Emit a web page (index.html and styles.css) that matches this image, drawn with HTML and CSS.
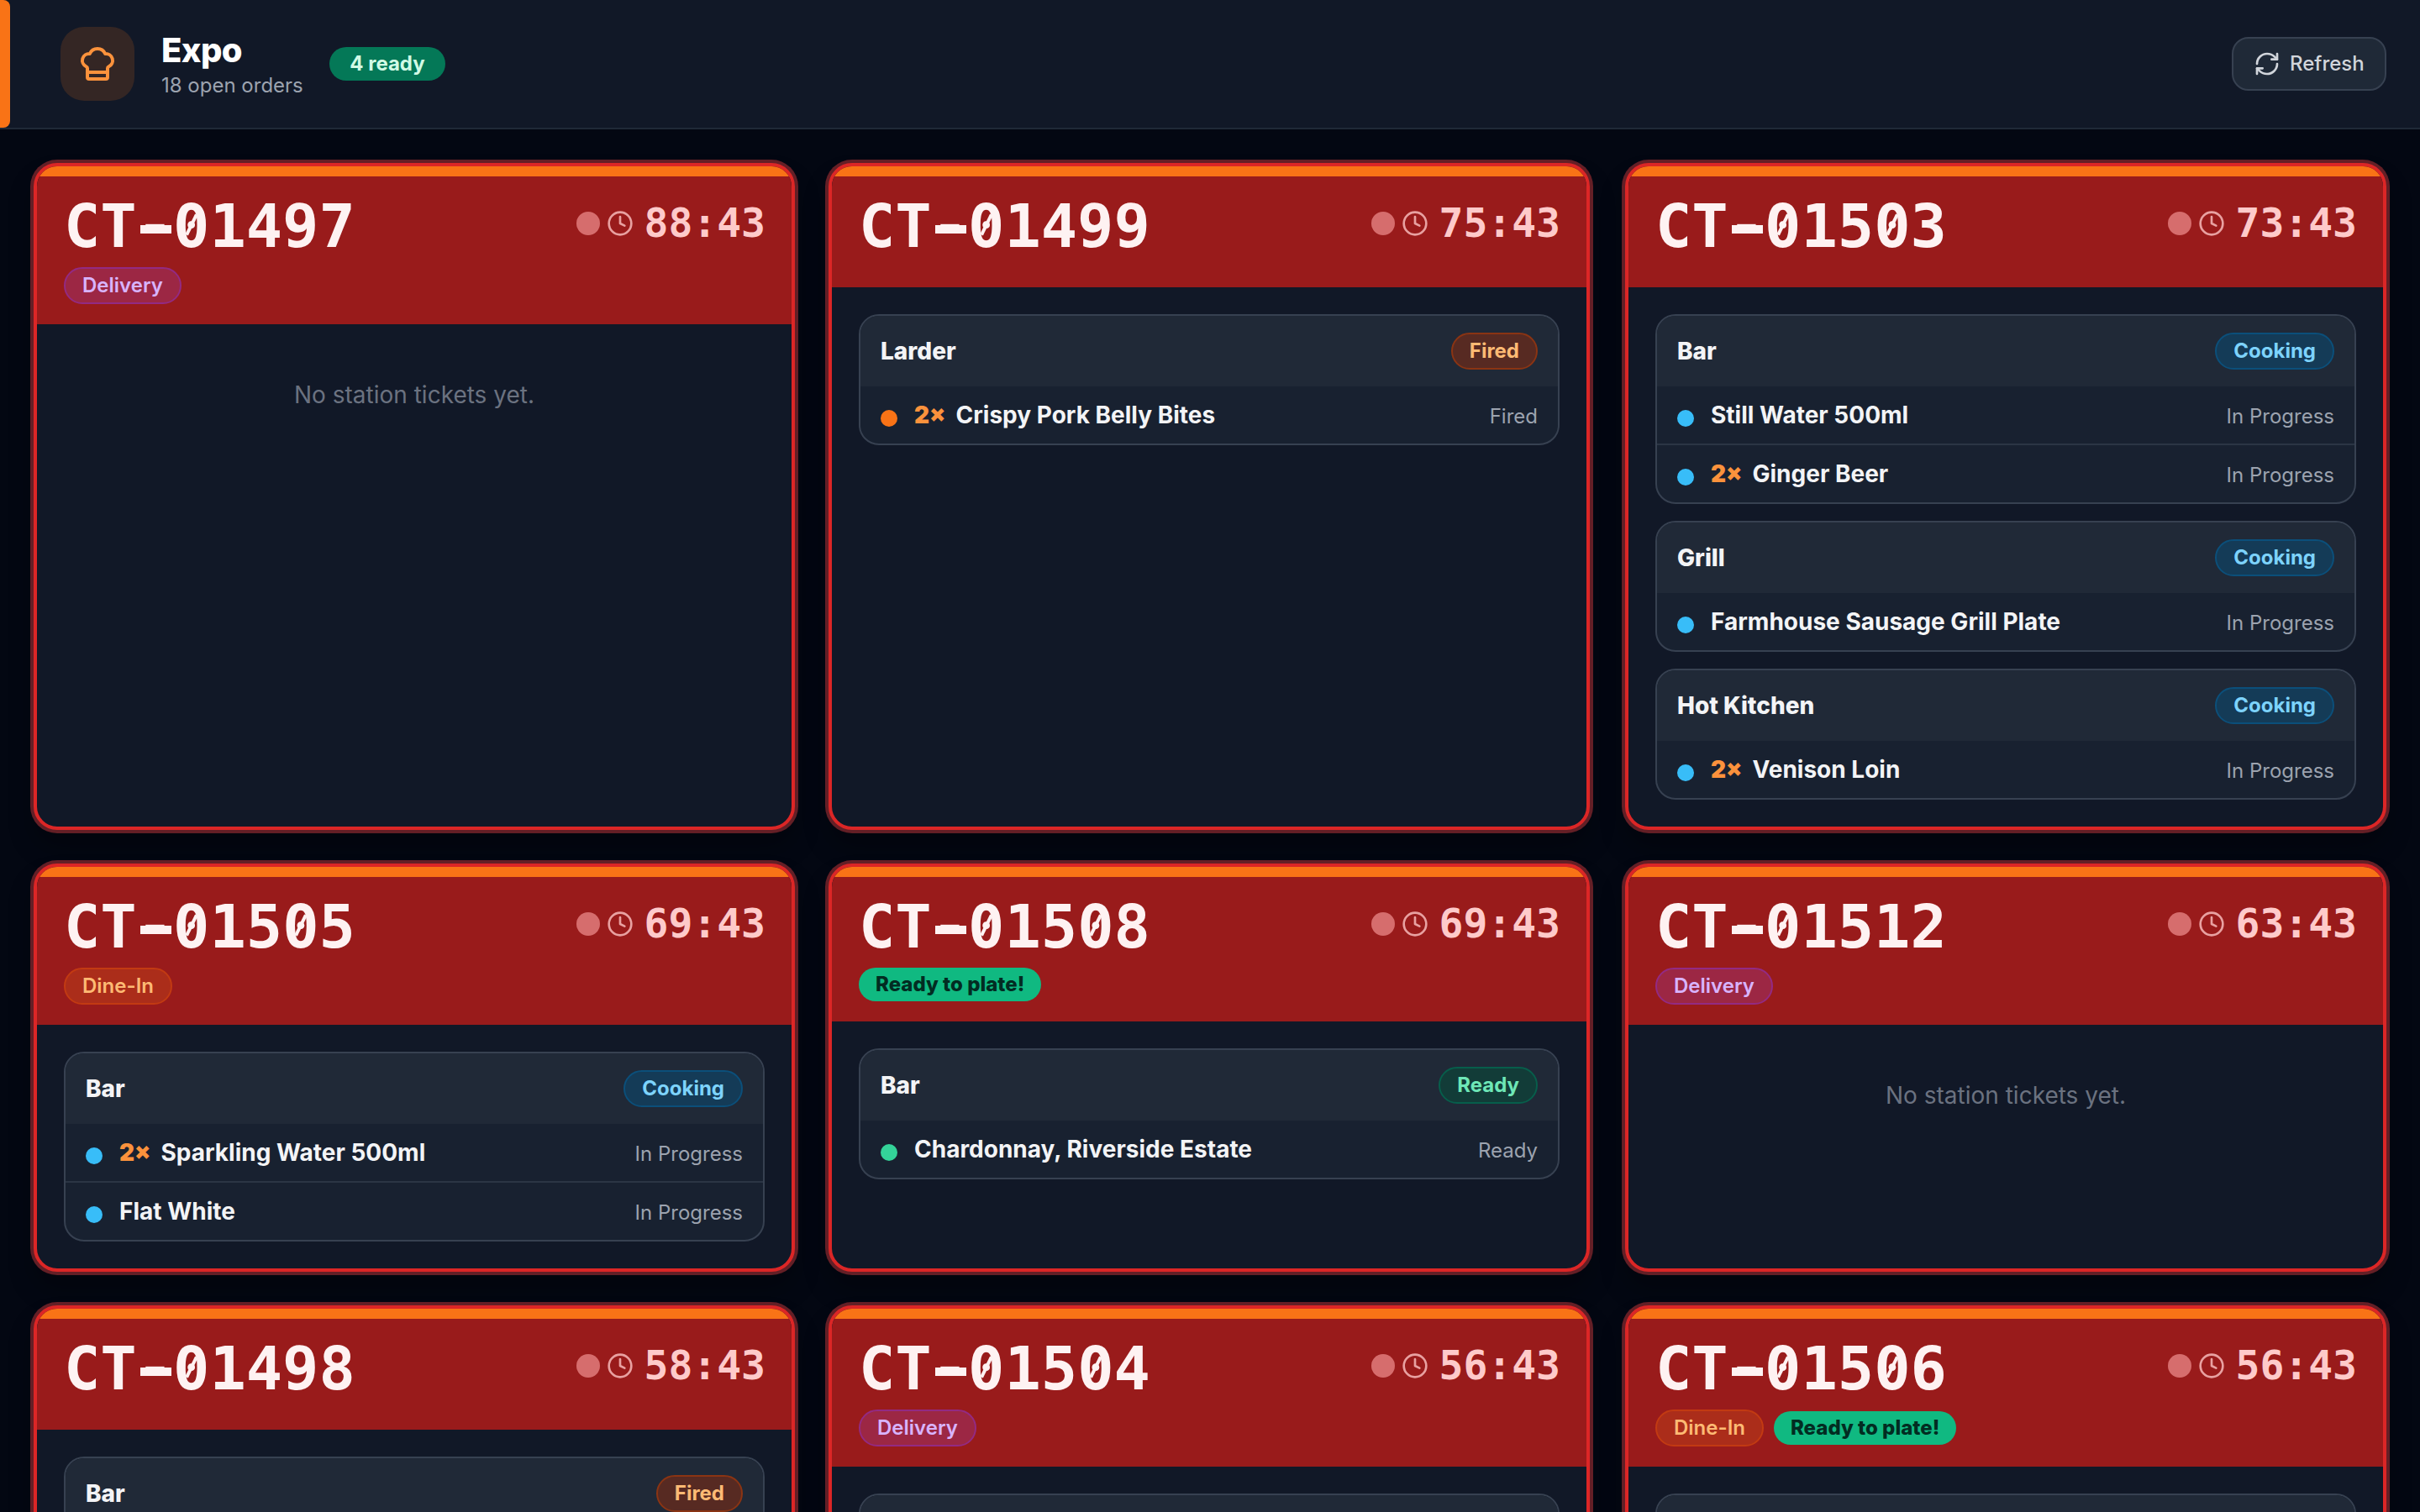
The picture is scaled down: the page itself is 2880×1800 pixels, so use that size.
FILE: index.html
```html
<!DOCTYPE html>
<html lang="en">
<head>
<meta charset="utf-8">
<title>Expo</title>
<link rel="stylesheet" href="styles.css">
</head>
<body>
<svg class="sprite" aria-hidden="true">
  <symbol id="clock" viewBox="0 0 24 24"><circle cx="12" cy="12" r="10"/><path d="M12 6v6l4 2"/></symbol>
</svg>
<header class="topbar">
  <div class="brand-icon">
    <svg class="icon icon-hat" viewBox="0 0 24 24"><path d="M17 21a1 1 0 0 0 1-1v-5.35c0-.457.316-.844.727-1.041a4 4 0 0 0-2.134-7.589 5 5 0 0 0-9.186 0 4 4 0 0 0-2.134 7.588c.411.198.727.585.727 1.041V20a1 1 0 0 0 1 1Z"/><path d="M6 17h12"/></svg>
  </div>
  <div class="heading">
    <h1 class="title">Expo</h1>
    <p class="subtitle">18 open orders</p>
  </div>
  <span class="ready-count">4 ready</span>
  <button class="refresh">
    <svg class="icon icon-refresh" viewBox="0 0 24 24"><path d="M3 12a9 9 0 0 1 9-9 9.75 9.75 0 0 1 6.74 2.74L21 8"/><path d="M21 3v5h-5"/><path d="M21 12a9 9 0 0 1-9 9 9.75 9.75 0 0 1-6.74-2.74L3 16"/><path d="M8 16H3v5"/></svg>
    Refresh
  </button>
</header>
<main class="board">
  <article class="card">
    <header class="card-head">
      <div class="card-row"><h2 class="order">CT<span class="dash">-</span><span class="zero">0</span>1497</h2><div class="timer"><i class="pulse"></i><svg class="icon icon-clock"><use href="#clock"/></svg><span class="time">88:43</span></div></div>
      <div class="tags"><span class="pill delivery">Delivery</span></div>
    </header>
    <div class="card-body"><p class="empty">No station tickets yet.</p></div>
  </article>
  <article class="card">
    <header class="card-head">
      <div class="card-row"><h2 class="order">CT<span class="dash">-</span><span class="zero">0</span>1499</h2><div class="timer"><i class="pulse"></i><svg class="icon icon-clock"><use href="#clock"/></svg><span class="time">75:43</span></div></div>
      <div class="tags"></div>
    </header>
    <div class="card-body">
      <section class="station">
        <div class="station-head"><h3 class="station-name">Larder</h3><span class="pill fired">Fired</span></div>
        <ul class="items">
          <li class="item"><i class="dot dot-fired"></i><span class="name"><b class="qty">2×</b>Crispy Pork Belly Bites</span><span class="status">Fired</span></li>
        </ul>
      </section>
    </div>
  </article>
  <article class="card">
    <header class="card-head">
      <div class="card-row"><h2 class="order">CT<span class="dash">-</span><span class="zero">0</span>15<span class="zero">0</span>3</h2><div class="timer"><i class="pulse"></i><svg class="icon icon-clock"><use href="#clock"/></svg><span class="time">73:43</span></div></div>
      <div class="tags"></div>
    </header>
    <div class="card-body">
      <section class="station">
        <div class="station-head"><h3 class="station-name">Bar</h3><span class="pill cooking">Cooking</span></div>
        <ul class="items">
          <li class="item"><i class="dot dot-cooking"></i><span class="name">Still Water 500ml</span><span class="status">In Progress</span></li>
          <li class="item"><i class="dot dot-cooking"></i><span class="name"><b class="qty">2×</b>Ginger Beer</span><span class="status">In Progress</span></li>
        </ul>
      </section>
      <section class="station">
        <div class="station-head"><h3 class="station-name">Grill</h3><span class="pill cooking">Cooking</span></div>
        <ul class="items">
          <li class="item"><i class="dot dot-cooking"></i><span class="name">Farmhouse Sausage Grill Plate</span><span class="status">In Progress</span></li>
        </ul>
      </section>
      <section class="station">
        <div class="station-head"><h3 class="station-name">Hot Kitchen</h3><span class="pill cooking">Cooking</span></div>
        <ul class="items">
          <li class="item"><i class="dot dot-cooking"></i><span class="name"><b class="qty">2×</b>Venison Loin</span><span class="status">In Progress</span></li>
        </ul>
      </section>
    </div>
  </article>
  <article class="card">
    <header class="card-head">
      <div class="card-row"><h2 class="order">CT<span class="dash">-</span><span class="zero">0</span>15<span class="zero">0</span>5</h2><div class="timer"><i class="pulse"></i><svg class="icon icon-clock"><use href="#clock"/></svg><span class="time">69:43</span></div></div>
      <div class="tags"><span class="pill dine-in">Dine-In</span></div>
    </header>
    <div class="card-body">
      <section class="station">
        <div class="station-head"><h3 class="station-name">Bar</h3><span class="pill cooking">Cooking</span></div>
        <ul class="items">
          <li class="item"><i class="dot dot-cooking"></i><span class="name"><b class="qty">2×</b>Sparkling Water 500ml</span><span class="status">In Progress</span></li>
          <li class="item"><i class="dot dot-cooking"></i><span class="name">Flat White</span><span class="status">In Progress</span></li>
        </ul>
      </section>
    </div>
  </article>
  <article class="card">
    <header class="card-head">
      <div class="card-row"><h2 class="order">CT<span class="dash">-</span><span class="zero">0</span>15<span class="zero">0</span>8</h2><div class="timer"><i class="pulse"></i><svg class="icon icon-clock"><use href="#clock"/></svg><span class="time">69:43</span></div></div>
      <div class="tags"><span class="plate">Ready to plate!</span></div>
    </header>
    <div class="card-body">
      <section class="station">
        <div class="station-head"><h3 class="station-name">Bar</h3><span class="pill ready">Ready</span></div>
        <ul class="items">
          <li class="item"><i class="dot dot-ready"></i><span class="name">Chardonnay, Riverside Estate</span><span class="status">Ready</span></li>
        </ul>
      </section>
    </div>
  </article>
  <article class="card">
    <header class="card-head">
      <div class="card-row"><h2 class="order">CT<span class="dash">-</span><span class="zero">0</span>1512</h2><div class="timer"><i class="pulse"></i><svg class="icon icon-clock"><use href="#clock"/></svg><span class="time">63:43</span></div></div>
      <div class="tags"><span class="pill delivery">Delivery</span></div>
    </header>
    <div class="card-body"><p class="empty">No station tickets yet.</p></div>
  </article>
  <article class="card">
    <header class="card-head">
      <div class="card-row"><h2 class="order">CT<span class="dash">-</span><span class="zero">0</span>1498</h2><div class="timer"><i class="pulse"></i><svg class="icon icon-clock"><use href="#clock"/></svg><span class="time">58:43</span></div></div>
      <div class="tags"></div>
    </header>
    <div class="card-body">
      <section class="station">
        <div class="station-head"><h3 class="station-name">Bar</h3><span class="pill fired">Fired</span></div>
      </section>
    </div>
  </article>
  <article class="card">
    <header class="card-head">
      <div class="card-row"><h2 class="order">CT<span class="dash">-</span><span class="zero">0</span>15<span class="zero">0</span>4</h2><div class="timer"><i class="pulse"></i><svg class="icon icon-clock"><use href="#clock"/></svg><span class="time">56:43</span></div></div>
      <div class="tags"><span class="pill delivery">Delivery</span></div>
    </header>
    <div class="card-body">
      <section class="station"><div class="station-head"></div></section>
    </div>
  </article>
  <article class="card">
    <header class="card-head">
      <div class="card-row"><h2 class="order">CT<span class="dash">-</span><span class="zero">0</span>15<span class="zero">0</span>6</h2><div class="timer"><i class="pulse"></i><svg class="icon icon-clock"><use href="#clock"/></svg><span class="time">56:43</span></div></div>
      <div class="tags"><span class="pill dine-in">Dine-In</span><span class="plate">Ready to plate!</span></div>
    </header>
    <div class="card-body">
      <section class="station"><div class="station-head"></div></section>
    </div>
  </article>
</main>
</body>
</html>
```
FILE: styles.css
```css
* { box-sizing: border-box; margin: 0; padding: 0; }

body {
  height: 1800px;
  overflow: hidden;
  background: #030712;
  color: #f3f4f6;
  font-family: Inter, "Liberation Sans", sans-serif;
  font-size: 28px;
  line-height: 40px;
}

.sprite { display: none; }

.icon {
  flex: none;
  fill: none;
  stroke: currentColor;
  stroke-width: 2;
  stroke-linecap: round;
  stroke-linejoin: round;
}

/* Top bar */
.topbar {
  position: relative;
  display: flex;
  align-items: center;
  gap: 32px;
  height: 154px;
  padding: 0 40px 0 72px;
  background: #111827;
  border-bottom: 2px solid #1f2937;
}
.topbar::before {
  content: "";
  position: absolute;
  left: 0;
  top: 0;
  bottom: 0;
  width: 12px;
  background: #f97316;
  border-radius: 0 8px 8px 0;
}
.brand-icon {
  display: grid;
  place-items: center;
  width: 88px;
  height: 88px;
  border-radius: 28px;
  background: #342624;
  color: #fb923c;
}
.icon-hat { width: 48px; height: 48px; }
.heading { width: 168px; white-space: nowrap; }
.title {
  color: #fff;
  font-size: 40px;
  font-weight: 800;
  line-height: 52px;
  letter-spacing: -.6px;
}
.subtitle { color: #9ca3af; font-size: 24px; line-height: 32px; }
.ready-count {
  width: 138px;
  height: 40px;
  border-radius: 20px;
  background: #047857;
  color: #d1fae5;
  font-size: 24px;
  font-weight: 700;
  text-align: center;
}
.refresh {
  display: flex;
  align-items: center;
  gap: 11px;
  width: 184px;
  height: 64px;
  margin-left: auto;
  padding: 0 0 0 24px;
  border: 2px solid #374151;
  border-radius: 20px;
  background: #1f2937;
  color: #d1d5db;
  font: 500 24px/32px Inter, "Liberation Sans", sans-serif;
}
.icon-refresh { width: 32px; height: 32px; }

/* Order cards */
.board {
  display: grid;
  grid-template-columns: 906px 908px 906px;
  gap: 40px;
  padding: 40px;
}
.card {
  width: 906px;
  overflow: hidden;
  border: 4px solid #dc2626;
  border-radius: 28px;
  background: #111827;
  box-shadow: 0 0 0 4px #641f26, 0 20px 30px rgba(0, 0, 0, .3);
}
.card-head {
  padding: 24px 32px;
  border-top: 12px solid #f97316;
  background: #991b1b;
}
.card-row { display: flex; justify-content: space-between; height: 72px; }
.order {
  height: 70px;
  color: #fef2f2;
  font: 700 72px/70px "DejaVu Sans Mono", "Liberation Mono", monospace;
}
/* Widened hyphen and slashed zero keep order numbers legible from a distance */
.dash {
  display: inline-block;
  position: relative;
  top: -2px;
  background: linear-gradient(#fef2f2, #fef2f2) 4px 36px / 37px 10px no-repeat;
}
.zero { display: inline-block; position: relative; }
.zero::after {
  content: "";
  position: absolute;
  left: 20px;
  top: 20px;
  width: 4px;
  height: 27px;
  background: #fef2f2;
  transform: rotate(26deg);
}
.timer { display: flex; align-items: center; height: 64px; margin-right: -1px; color: #fecaca; }
.pulse { width: 28px; height: 28px; margin-right: 8px; border-radius: 50%; background: #d66d6d; }
.icon-clock { width: 32px; height: 32px; margin-right: 13px; color: #e8a1a1; }
.time { margin-bottom: 2px; font: 700 48px/64px "DejaVu Sans Mono", "Liberation Mono", monospace; }
.tags { display: flex; align-items: center; gap: 12px; margin-top: 12px; }

.pill {
  height: 44px;
  padding: 0 20px;
  border: 2px solid;
  border-radius: 22px;
  font-size: 24px;
  font-weight: 650;
  line-height: 40px;
}
.delivery { border-color: #932a83; background: #9c2744; color: #d8b4fe; font-weight: 600; }
.dine-in { border-color: #c23a12; background: #ab2d1a; color: #fdba74; font-weight: 600; }
.fired { border-color: #8a3413; background: #572a22; color: #fdba74; }
.cooking { border-color: #0b4f7a; background: #143b57; color: #7dd3fc; }
.ready { border-color: #075e4b; background: #123c38; color: #6ee7b7; }
.plate {
  height: 40px;
  padding: 0 20px;
  border-radius: 20px;
  background: #10b981;
  color: #022c22;
  font-size: 24px;
  font-weight: 800;
}

.card-body { display: flex; flex-direction: column; gap: 20px; padding: 32px; }
.empty { padding: 32px 0; color: #6b7280; text-align: center; }

/* Station tickets */
.station {
  overflow: hidden;
  border: 2px solid #374151;
  border-radius: 24px;
  background: #182130;
}
.station-head {
  display: flex;
  align-items: center;
  justify-content: space-between;
  height: 84px;
  padding: 0 24px;
  background: #202937;
}
.station-name { font-size: 28px; font-weight: 800; }
.items { list-style: none; }
.item { display: flex; align-items: baseline; padding: 14px 24px; height: 68px; }
.item + .item { height: 70px; border-top: 2px solid #2b3544; }
.dot { align-self: flex-start; width: 20px; height: 20px; margin: 14px 20px 0 0; border-radius: 50%; }
.dot-fired { background: #f97316; }
.dot-cooking { background: #38bdf8; }
.dot-ready { background: #34d399; }
.name { flex: 1; font-weight: 700; }
.qty { margin-right: 12px; color: #fb923c; font-weight: 900; }
.status { color: #9ca3af; font-size: 24px; }
```
